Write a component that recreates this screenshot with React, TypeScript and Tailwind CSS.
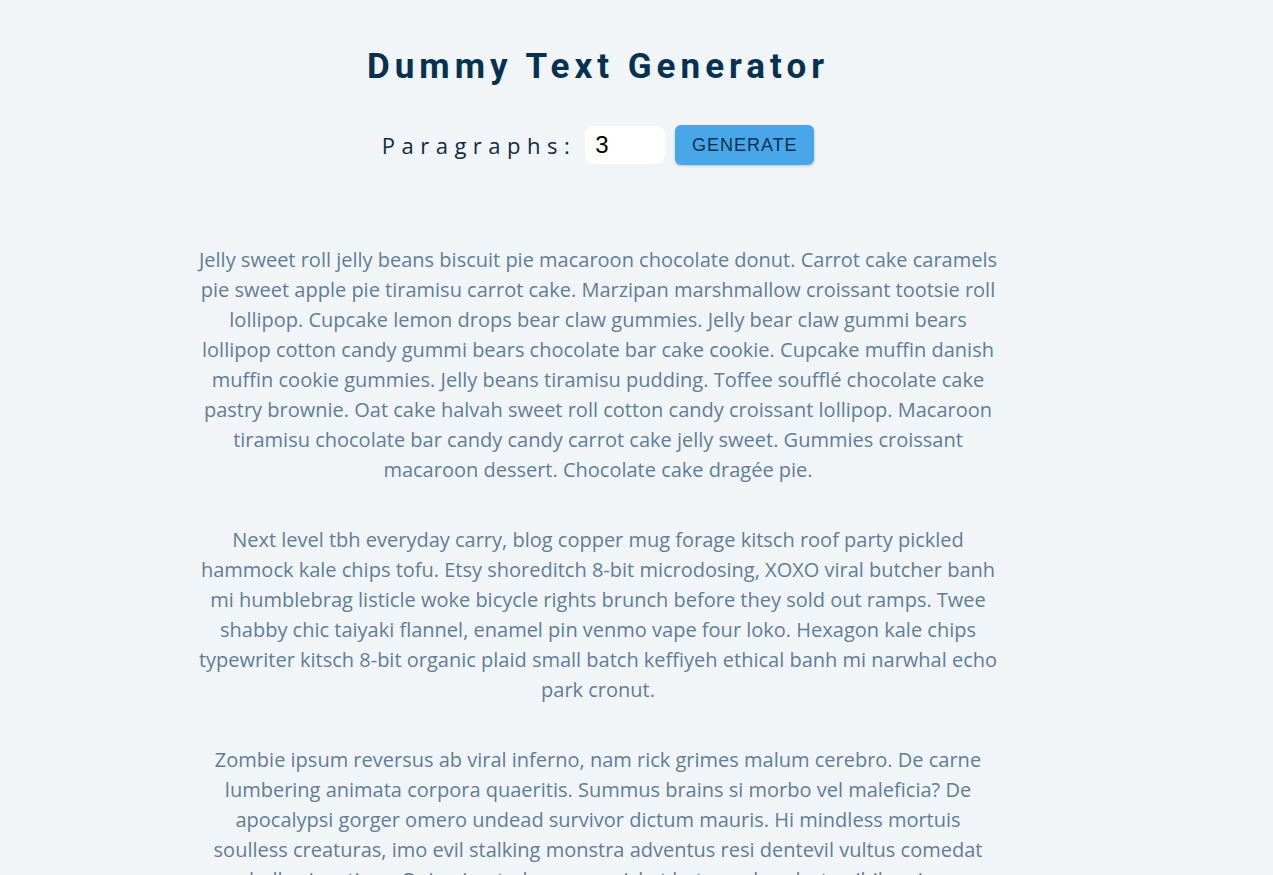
const paragraphs = [
  'Jelly sweet roll jelly beans biscuit pie macaroon chocolate donut. Carrot cake caramels pie sweet apple pie tiramisu carrot cake. Marzipan marshmallow croissant tootsie roll lollipop. Cupcake lemon drops bear claw gummies. Jelly bear claw gummi bears lollipop cotton candy gummi bears chocolate bar cake cookie. Cupcake muffin danish muffin cookie gummies. Jelly beans tiramisu pudding. Toffee soufflé chocolate cake pastry brownie. Oat cake halvah sweet roll cotton candy croissant lollipop. Macaroon tiramisu chocolate bar candy candy carrot cake jelly sweet. Gummies croissant macaroon dessert. Chocolate cake dragée pie.',
  'Next level tbh everyday carry, blog copper mug forage kitsch roof party pickled hammock kale chips tofu. Etsy shoreditch 8-bit microdosing, XOXO viral butcher banh mi humblebrag listicle woke bicycle rights brunch before they sold out ramps. Twee shabby chic taiyaki flannel, enamel pin venmo vape four loko. Hexagon kale chips typewriter kitsch 8-bit organic plaid small batch keffiyeh ethical banh mi narwhal echo park cronut.',
  'Zombie ipsum reversus ab viral inferno, nam rick grimes malum cerebro. De carne lumbering animata corpora quaeritis. Summus brains si morbo vel maleficia? De apocalypsi gorger omero undead survivor dictum mauris. Hi mindless mortuis soulless creaturas, imo evil stalking monstra adventus resi dentevil vultus comedat cerebella viventium. Qui animated corpse, cricket bat max brucks terribilem incessu zomby. The voodoo sacerdos flesh eater, suscitat mortuos comedere carnem virus.',
]

export default function App() {
  return (
    <div className="min-h-[875px] bg-[#f1f5f8]">
      <section className="w-[1196px] flex flex-col items-center pt-[42px]">
        <h1 className="font-['Roboto',sans-serif] text-[35px] leading-[50px] font-bold tracking-[5px] text-[#063251]">
          Dummy Text Generator
        </h1>
        <form className="mt-[33px] flex items-center" onSubmit={(e) => e.preventDefault()}>
          <label className="font-['Open_Sans',sans-serif] text-[22px] tracking-[6.5px] text-[#102a42] mr-[9px]">
            Paragraphs:
          </label>
          <input
            type="number"
            defaultValue={3}
            className="w-[80px] h-[38px] rounded-[8px] bg-white px-[10px] font-['Liberation_Sans',sans-serif] text-[24px] text-black outline-none [appearance:textfield]"
          />
          <button
            type="submit"
            className="ml-[10px] w-[139px] h-[40px] rounded-[6px] bg-[#49a6e9] font-['Liberation_Sans',sans-serif] text-[18px] tracking-[1px] text-[#063251] shadow-[0_1px_3px_rgba(0,0,0,0.2)]"
          >
            GENERATE
          </button>
        </form>
        <article className="mt-[80px] w-[800px] text-center">
          {paragraphs.map((p) => (
            <p key={p.slice(0, 10)} className="mb-[40px] font-['Open_Sans',sans-serif] text-[20px] leading-[30px] text-[#617d98]">
              {p}
            </p>
          ))}
        </article>
      </section>
    </div>
  )
}
